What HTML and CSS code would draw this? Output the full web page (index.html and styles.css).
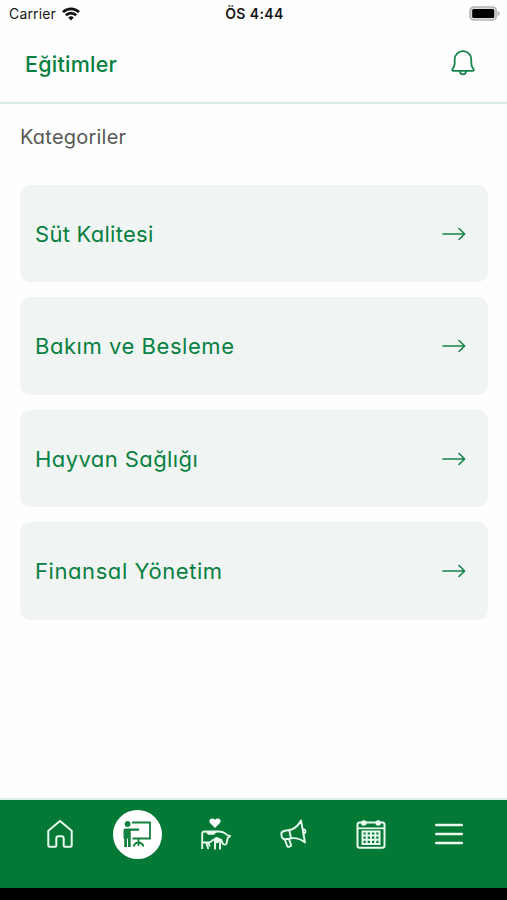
FILE: index.html
```html
<!DOCTYPE html>
<html lang="tr">
<head>
    <meta charset="UTF-8">
    <meta name="viewport" content="width=device-width, initial-scale=1.0">
    <title>Eğitimler</title>
    <link rel="stylesheet" href="styles.css">
</head>
<body>
    <div class="app">
        <div class="status-bar">
            <div class="carrier">
                <span>Carrier</span>
                <svg width="18" height="14" viewBox="0 0 18 14" fill="none" stroke="#111" stroke-width="2.7">
                    <path d="M1 5.1a11.3 11.3 0 0 1 16 0"/>
                    <path d="M3.9 8.2a7.2 7.2 0 0 1 10.2 0"/>
                    <path d="M6.2 10.5a4 4 0 0 1 5.6 0L9 13.5z" fill="#111" stroke="none"/>
                </svg>
            </div>
            <div class="time">ÖS 4:44</div>
            <svg class="battery" width="31" height="15" viewBox="0 0 31 15">
                <rect x="1.2" y="1" width="26" height="13" rx="3.6" fill="#ddd" stroke="#b5b5b5" stroke-width="1.7"/>
                <rect x="3.2" y="3" width="22" height="9" rx="1.5" fill="#000"/>
                <path d="M28.6 5v5c1.9-.8 2.2-1.6 2.2-2.5s-.3-1.7-2.2-2.5z" fill="#b5b5b5"/>
            </svg>
        </div>

        <header class="header">
            <h1>Eğitimler</h1>
            <svg class="bell" width="24" height="26" viewBox="0 0 24 26" fill="none" stroke="#16834a" stroke-width="1.8" stroke-linejoin="round">
                <path d="M12 1.2c-4.800 0-8.300 3.600-8.300 8.200v4.100c0 2.600-.8 3.800-2.300 5.700-.6.8-.3 1.600.6 1.600h20c.9 0 1.200-.8.6-1.600-1.500-1.900-2.300-3.100-2.300-5.700V9.400c0-4.600-3.500-8.200-8.300-8.200z"/>
                <path d="M9 20.9c0 2 1.200 3.500 3 3.500s3-1.500 3-3.500"/>
            </svg>
        </header>

        <main class="content">
            <h2>Kategoriler</h2>
            <div class="categories">
                <a class="category" href="#">
                    <span class="label quality">Süt Kalitesi</span>
                    <svg class="arrow" width="24" height="14" viewBox="0 0 24 14"><path d="M1 7h21.500M17 1.500L22.700 7 17 12.500"/></svg>
                </a>
                <a class="category" href="#">
                    <span class="label feeding">Bakım ve Besleme</span>
                    <svg class="arrow" width="24" height="14" viewBox="0 0 24 14"><path d="M1 7h21.500M17 1.500L22.700 7 17 12.500"/></svg>
                </a>
                <a class="category" href="#">
                    <span class="label health">Hayvan Sağlığı</span>
                    <svg class="arrow" width="24" height="14" viewBox="0 0 24 14"><path d="M1 7h21.500M17 1.500L22.700 7 17 12.500"/></svg>
                </a>
                <a class="category" href="#">
                    <span class="label finance">Finansal Yönetim</span>
                    <svg class="arrow" width="24" height="14" viewBox="0 0 24 14"><path d="M1 7h21.500M17 1.500L22.700 7 17 12.500"/></svg>
                </a>
            </div>
        </main>

        <nav class="tab-bar">
            <!-- home -->
            <a class="tab" href="#">
                <svg width="30" height="30" viewBox="0 0 30 30" fill="none" stroke="#e8fbee" stroke-width="2" stroke-linejoin="round">
                    <path d="M15 1.900L3.300 11.700V26.600q0 1.200 1.200 1.200h5.800q1 0 1-1.200V19.500q0-2.200 2.200-2.200h3q2.200 0 2.200 2.200v7.100q0 1.200 1 1.200h5.800q1.200 0 1.200-1.200V11.700z"/>
                </svg>
            </a>
            <!-- trainings -->
            <a class="tab active" href="#">
                <svg width="30" height="30" viewBox="0 0 30 30" fill="none" stroke="#12803f" stroke-width="1.8">
                    <circle cx="5.600" cy="5" r="2.900" fill="#12803f" stroke="none"/>
                    <path d="M1.500 11.500q0-2 2-2H17v2.300H8.700V28H6V19.500H5V28H2.200v-8.500h-.7z" fill="#12803f" stroke="none"/>
                    <path d="M10 3.500H28V19.500H10.500M16.500 19.500v4M11.500 27.500c1-3 3-4 5-4s4 1 5 4M16.500 23.500V27"/>
                </svg>
            </a>
            <!-- animal health -->
            <a class="tab" href="#">
                <svg width="34" height="34" viewBox="0 0 34 34" fill="none" stroke="#e8fbee" stroke-width="1.8" stroke-linejoin="round">
                    <path d="M17 11l-4.700-4.700C9.500 3.300 13.600-.5 17 2.800c3.400-3.300 7.500.5 4.700 3.500z" fill="#fff" stroke="none"/>
                    <path d="M4.200 32V17q0-2.500 2.500-2.500H20c4 0 7 1 9 3.500l3.200 1-2.500 2-1.200 5.500c-.5 1.500-2.500 1.300-3.500.3l-2-4.300-5-1.500"/>
                    <path d="M7 14.300h12.500L16 17.700h-6z" fill="#e8fbee" stroke="none"/>
                    <path d="M4.500 25.500h6c2.500 0 3.200-2 5-3M8.300 26l2 6M10.300 25.500l1.500 4"/>
                    <path d="M21 22l1.500 3-.5 2v5.500M17 25v7.500" stroke-width="2"/>
                    <circle cx="18.500" cy="23.300" r="3" fill="#e8fbee" stroke="none"/>
                </svg>
            </a>
            <!-- announcements -->
            <a class="tab" href="#">
                <svg width="32" height="32" viewBox="0 0 32 32" fill="none" stroke="#e8fbee" stroke-width="1.9" stroke-linejoin="round">
                    <path d="M14.500 11.500L7 13c-2.200.6-3 2-2.600 4l.5 2c.6 1.800 2 2.600 4 2.200l5.600-.9c5-.7 9 .7 13.500 4.200L24 2.500c-2.300 4.500-5 7.500-9.500 9zM12.300 12l1.600 8.300M26.300 11.200c2.500.3 3 3.300.8 4.500M7.600 21.200l2.600 6.800q.6 1.200 1.800.8l1.400-.6q1-.4.6-1.500l-2.200-6"/>
                </svg>
            </a>
            <!-- calendar -->
            <a class="tab" href="#">
                <svg width="32" height="32" viewBox="0 0 32 32" fill="none" stroke="#e8fbee" stroke-width="2">
                    <rect x="2.500" y="4.500" width="27" height="25.300" rx="2"/>
                    <path d="M3 10.300h26" stroke-width="1.700"/>
                    <circle cx="8.800" cy="5" r="2.800" fill="#e8fbee" stroke="none"/>
                    <circle cx="23.200" cy="5" r="2.800" fill="#e8fbee" stroke="none"/>
                    <path d="M7.500 13.500h17v12.500h-17zM7.500 17.500h17M7.500 21.700h17M11.700 13.500V26M16 13.500V26M20.300 13.500V26" stroke-width="2"/>
                </svg>
            </a>
            <!-- menu -->
            <a class="tab" href="#">
                <svg width="30" height="26" viewBox="0 0 30 26" stroke="#e8fbee" stroke-width="2.7" stroke-linecap="round">
                    <path d="M2.300 4h25.400M2.300 13h25.400M2.300 22h25.400"/>
                </svg>
            </a>
        </nav>
        <div class="home-area"></div>
    </div>
</body>
</html>
```

FILE: styles.css
```css
* {
    margin: 0;
    padding: 0;
    box-sizing: border-box;
}

body {
    background-color: #fefefe;
    color: #078040;
    font-family: Inter, "Open Sans", sans-serif;
    font-feature-settings: "cv11";
    overflow: hidden;
}

a {
    color: inherit;
    text-decoration: none;
}

svg {
    display: block;
    flex-shrink: 0;
}

.app {
    height: 900px;
    display: flex;
    flex-direction: column;
}

.status-bar {
    height: 28px;
    padding: 0 7px 1px 9px;
    display: grid;
    grid-template-columns: 1fr auto 1fr;
    align-items: center;
    color: #161616;
    font-size: 14px;
    font-feature-settings: normal;
}

.carrier {
    display: flex;
    align-items: center;
    gap: 6px;
    letter-spacing: 0.15px;
}

.time {
    font-weight: 600;
    letter-spacing: 0.4px;
}

.battery {
    justify-self: end;
}

.header {
    height: 76px;
    padding: 0 32px 4px 25px;
    display: flex;
    align-items: center;
    justify-content: space-between;
    border-bottom: 2px solid #dcebe6;
}

.header h1 {
    padding-top: 2px;
    font-size: 21.5px;
    font-weight: 500;
    letter-spacing: 0.25px;
}

.content {
    flex: 1;
    padding: 20px 19.5px 0 20px;
}

.content h2 {
    height: 60.8px;
    color: #585858;
    font-size: 20px;
    font-weight: 400;
    line-height: 26px;
    letter-spacing: 0.22px;
}

.categories {
    display: flex;
    flex-direction: column;
    gap: 15px;
}

.category {
    height: 97.5px;
    padding: 0 22px 0 15px;
    display: flex;
    align-items: center;
    justify-content: space-between;
    background-color: #f0f5f4;
    border-radius: 10px;
}

.label {
    font-size: 22px;
}

.quality {
    letter-spacing: 0.27px;
}

.feeding {
    letter-spacing: 0.55px;
}

.health {
    letter-spacing: 0.42px;
}

.finance {
    letter-spacing: 0.58px;
}

.arrow {
    fill: none;
    stroke: #16834a;
    stroke-width: 1.6;
    stroke-linecap: round;
    stroke-linejoin: round;
}

.tab-bar {
    height: 90px;
    padding: 0 19.5px 20px 20.8px;
    display: flex;
    align-items: center;
    background-color: #047835;
    border-top: 2px solid #dcefe5;
}

.tab {
    flex: 1;
    display: flex;
    justify-content: center;
}

.tab.active {
    flex: none;
    width: 49px;
    height: 49px;
    margin: 0 14.4px;
    align-items: center;
    background-color: #fff;
    border-radius: 50%;
}

.home-area {
    height: 12px;
    background-color: #000;
}
```
